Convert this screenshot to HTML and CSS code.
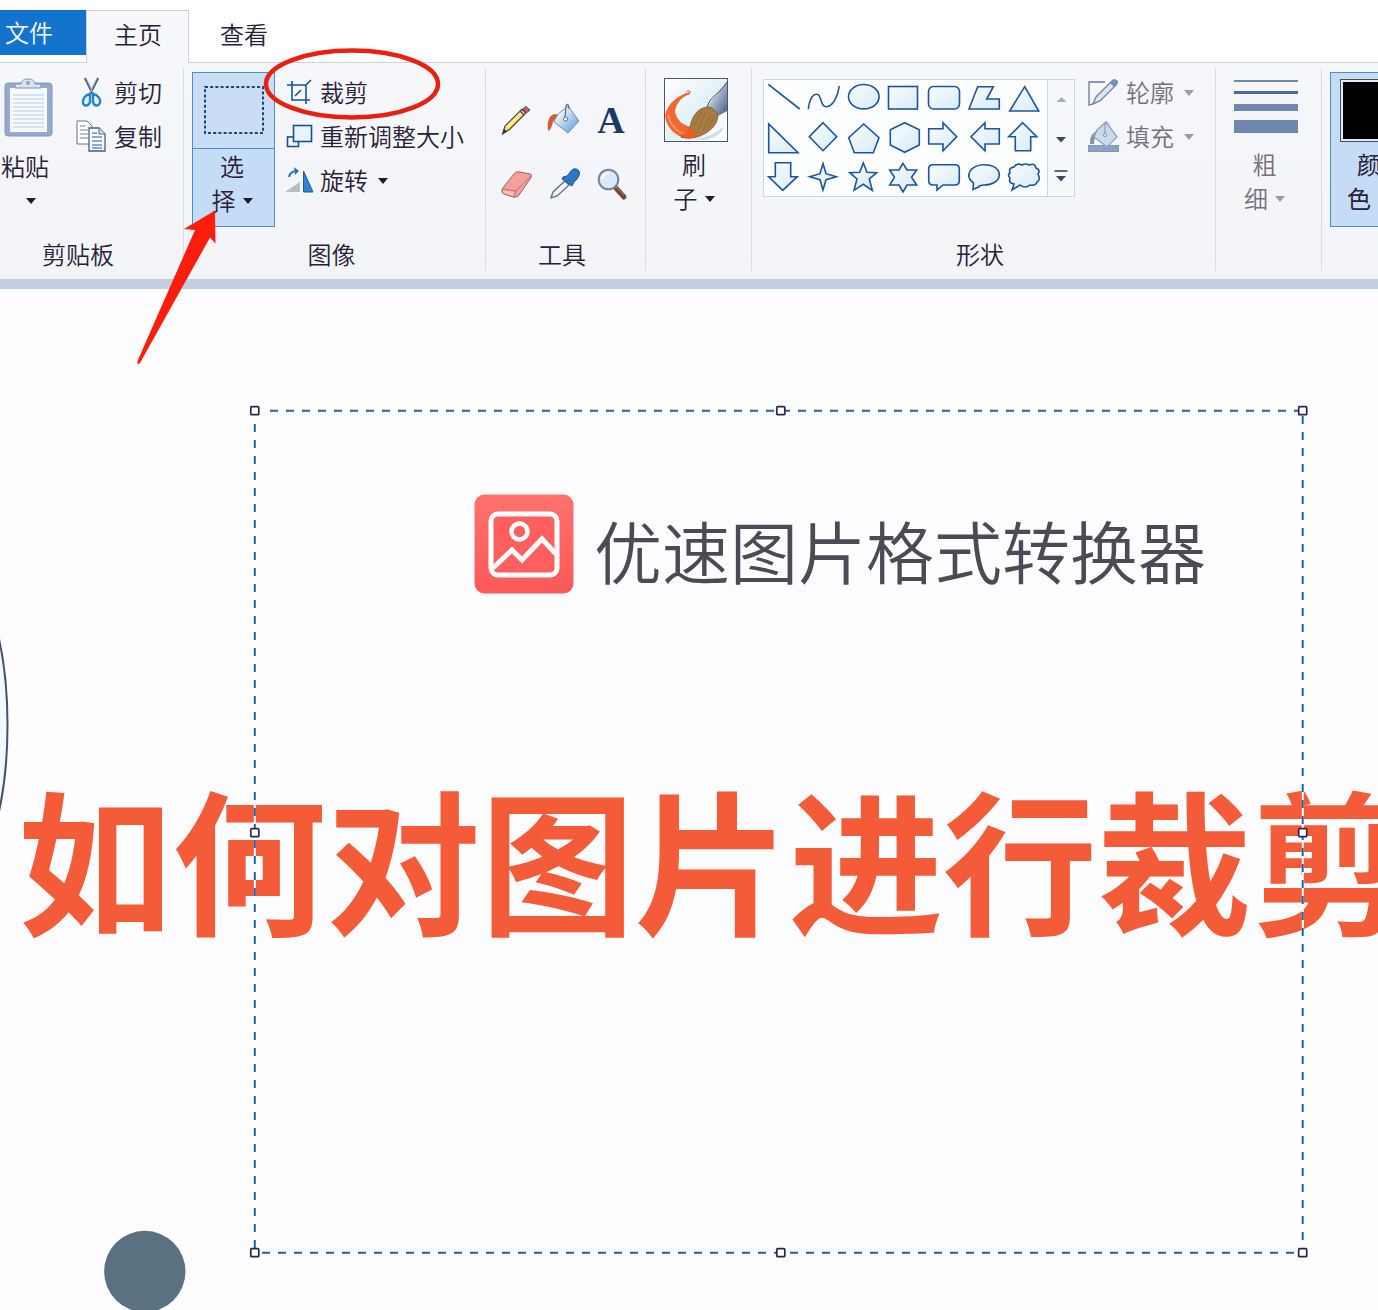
FILE: index.html
```html
<!DOCTYPE html>
<html lang="zh">
<head>
    <meta charset="UTF-8">
    <meta name="viewport" content="width=device-width, initial-scale=1.0">
    <title>画图</title>
    <link rel="stylesheet" href="styles.css">
</head>
<body>
    <!-- 渐变 -->
    <svg class="defs" width="0" height="0">
        <defs>
            <linearGradient id="g-shape" x1="0" y1="0" x2="1" y2="1">
                <stop offset="0" stop-color="#fafdff"/><stop offset="1" stop-color="#d5ebfa"/>
            </linearGradient>
            <linearGradient id="g-bucket" x1="0" y1="0" x2="1" y2="1">
                <stop offset="0.2" stop-color="#f4f9fd"/><stop offset="1" stop-color="#4f94d8"/>
            </linearGradient>
            <linearGradient id="g-logo" x1="0" y1="0" x2="0" y2="1">
                <stop offset="0" stop-color="#ff726d"/><stop offset="1" stop-color="#fb5858"/>
            </linearGradient>
            <linearGradient id="g-brush" x1="0" y1="0" x2="1" y2="1">
                <stop offset="0" stop-color="#ffffff"/><stop offset="0.5" stop-color="#e3f1f8"/><stop offset="1" stop-color="#ffffff"/>
            </linearGradient>
            <linearGradient id="g-metal" x1="0" y1="0" x2="1" y2="1">
                <stop offset="0.2" stop-color="#dfe8f2"/><stop offset="0.6" stop-color="#8b9db8"/><stop offset="1" stop-color="#435878"/>
            </linearGradient>
        </defs>
    </svg>

    <div class="tabs">
        <div class="tab tab-file">文件</div>
        <div class="tab tab-home">主页</div>
        <div class="tab tab-view">查看</div>
    </div>

    <div class="ribbon">
        <!-- 剪贴板 -->
        <div class="group group-clipboard">
            <div class="group-body">
                <div class="paste">
                    <svg width="50" height="62" viewBox="0 0 50 62">
                        <rect x="1" y="5" width="47" height="53" rx="3" fill="#94a9cb" stroke="#8398bb"/>
                        <rect x="6" y="10" width="37" height="44" fill="#f5f9fe"/>
                        <path d="M9 17H40M9 21H40M9 25H40M9 29H40M9 33H40M9 37H40M9 41H40M9 45H40M9 49H40" stroke="#bccbe2"/>
                        <path d="M11 10V6H17C18 2 20 1 24 1S30 2 31 6H37V10Z" fill="#d9e4f0" stroke="#7c92b4"/>
                        <circle cx="24" cy="5" r="2" fill="#8fa3c0"/>
                    </svg>
                    <span>粘贴</span>
                    <i class="caret"></i>
                </div>
                <div class="rows">
                    <div class="row">
                        <svg width="30" height="32" viewBox="0 0 30 32">
                            <path d="M9 2L18 20M22 2L13 20" stroke="#4b5c78" stroke-width="2.4"/>
                            <path d="M10 2L18 19M21 2L13 19" stroke="#c3cfdd" stroke-width="0.8"/>
                            <path d="M14 18C9 19 6.500 23 7 27C8 31 13 30 14 26ZM17 18C22 19 25 23 24 27C22 31 18 30 17 26Z" fill="#e8f4fd" stroke="#2184d4" stroke-width="2.400"/>
                        </svg>
                        <span>剪切</span>
                    </div>
                    <div class="row">
                        <svg width="30" height="32" viewBox="0 0 30 32">
                            <path d="M1 1H11L16 6V24H1Z" fill="#fff" stroke="#66738f"/>
                            <path d="M4 6H9M4 10H12M4 14H12M4 18H12" stroke="#9aabc9" stroke-width="1.500"/>
                            <path d="M13 8H23L29 14V31H13Z" fill="#fff" stroke="#4c5a7c" stroke-width="1.300"/>
                            <path d="M23 8V14H29" fill="#dde7f2" stroke="#4c5a7c"/>
                            <path d="M16 13H21M16 17H26M16 21H26M16 25H26M16 28H26" stroke="#5e8dd2" stroke-width="1.500"/>
                        </svg>
                        <span>复制</span>
                    </div>
                </div>
            </div>
            <div class="group-label">剪贴板</div>
        </div>

        <!-- 图像 -->
        <div class="group group-image">
            <div class="group-body">
                <div class="select-btn">
                    <div class="select-icon">
                        <svg width="62" height="50" viewBox="0 0 62 50">
                            <rect x="2" y="2" width="58" height="46" fill="none" stroke="#15467f" stroke-width="2" stroke-dasharray="3 2.200"/>
                        </svg>
                    </div>
                    <div class="stack">
                        <span>选</span>
                        <span class="with-caret">择<i class="caret"></i></span>
                    </div>
                </div>
                <div class="rows">
                    <div class="row">
                        <svg width="28" height="28" viewBox="0 0 28 28">
                            <path d="M6 3V22H24M1 7H20V26M19 8L25 2M9 18L15 12" fill="none" stroke="#17549a" stroke-width="1.600"/>
                        </svg>
                        <span>裁剪</span>
                    </div>
                    <div class="row">
                        <svg width="28" height="28" viewBox="0 0 28 28">
                            <rect x="1.500" y="15" width="11" height="9.500" fill="#eef6fc" stroke="#1a4f97" stroke-width="1.600"/>
                            <rect x="7.500" y="3.500" width="18" height="16" fill="#e6f3fc" stroke="#1a4f97" stroke-width="1.600"/>
                        </svg>
                        <span>重新调整大小</span>
                    </div>
                    <div class="row">
                        <svg width="28" height="28" viewBox="0 0 28 28">
                            <path d="M14 16V26H-1Z" fill="#b9bec5"/>
                            <path d="M17.500 5L27 26H17.500Z" fill="#2e86cf" stroke="#1a5b9d"/>
                            <path d="M3 11C4 6 7 5 11 5" fill="none" stroke="#2675c2" stroke-width="2"/>
                            <path d="M8 1L13 5L9 9Z" fill="#2675c2"/>
                        </svg>
                        <span>旋转</span>
                        <i class="caret"></i>
                    </div>
                </div>
            </div>
            <div class="group-label">图像</div>
        </div>

        <!-- 工具 -->
        <div class="group group-tools">
            <div class="group-body tools">
                <svg width="34" height="34" viewBox="0 0 34 34">
                    <path d="M3.500 31L6 23L23 6L27 10L11 26Z" fill="#f8d775" stroke="#4a4030" stroke-width="1.100"/>
                    <path d="M8 24.500L24 8.500" stroke="#fff0ad" stroke-width="1.500"/>
                    <path d="M3.500 31L5 26L8 28.500Z" fill="#383039"/>
                    <path d="M24 6L27 3.500L31 7L28 9.500Z" fill="#cc6074" stroke="#713b49"/>
                    <path d="M21 8L25 12M23 6.500L27 10" stroke="#4b515b" stroke-width="1.400"/>
                </svg>
                <svg width="34" height="34" viewBox="0 0 34 34">
                    <path d="M10 12L21 3L32 18L21 30L7 19Z" fill="url(#g-bucket)" stroke="#6f93ba"/>
                    <path d="M8 11C2 12 0 18 1 28C5 27 5 20 7 17L11 12Z" fill="#d65a35"/>
                    <path d="M18 15L19 3C20 0 22 1 22 6" fill="none" stroke="#5b697d" stroke-width="1.200"/>
                    <circle cx="18.500" cy="16" r="2" fill="#fff" stroke="#5b697d"/>
                </svg>
                <span class="letter-a">A</span>
                <svg width="34" height="34" viewBox="0 0 34 34">
                    <path d="M3 22L15 7Q17 4 21 5L31 7Q34 8 31 12L20 28Q18 31 14 30L5 27Q2 26 3 22Z" fill="#f4a09e" stroke="#a75a59"/>
                    <path d="M3 22L17 24L32 9M17 24L15 30" fill="none" stroke="#c26c69"/>
                    <path d="M4 23L16 25L14 29L5 26Z" fill="#f7c3b2"/>
                </svg>
                <svg width="34" height="34" viewBox="0 0 34 34">
                    <path d="M4 31L6 25L18 14L22 18L10 29Z" fill="#f7fbfe" stroke="#61738e" stroke-width="1.400"/>
                    <path d="M16 10L20 9L25 3Q29 0 32 4Q34 7 30 12L27 15L25 19L15 12Z" fill="#2b76c5" stroke="#205693"/>
                </svg>
                <svg width="34" height="34" viewBox="0 0 34 34">
                    <path d="M20 20L29 30" stroke="#784735" stroke-width="5" stroke-linecap="round"/>
                    <path d="M21 20L29 28" stroke="#bd8067" stroke-width="1"/>
                    <circle cx="13.500" cy="12.500" r="9.800" fill="#d9eafb" stroke="#788499" stroke-width="2"/>
                    <path d="M7 12Q8 6 14 6" fill="none" stroke="#fff" stroke-width="2"/>
                </svg>
            </div>
            <div class="group-label">工具</div>
        </div>

        <!-- 刷子 -->
        <div class="group group-brush">
            <div class="group-body brush">
                <svg width="64" height="64" viewBox="0 0 64 64">
                    <rect x="0.500" y="0.500" width="63" height="63" fill="url(#g-brush)"/>
                    <path d="M30 61Q48 60 60 48Q58 58 40 62Z" fill="#cbdde7"/>
                    <path d="M26 14C14 17 4 25 1 37C2 48 8 55 19 60L34 58L30 49C20 49 12 42 11 33C12 26 17 19 26 16Z" fill="#ed6a33"/>
                    <path d="M4 37C6 47 12 53 22 57" fill="none" stroke="#f98d58" stroke-width="2"/>
                    <path d="M22 14Q23 12 26 13Q27 15 24 17" fill="none" stroke="#d7795b"/>
                    <path d="M43 29L54 14L63 4V33L52 39Z" fill="url(#g-metal)"/>
                    <path d="M43 29C47 17 55 17 63 4" fill="none" stroke="#444c5f"/>
                    <path d="M26 50C27 40 33 30 43 29Q51 29 54 38C53 47 46 54 36 58Q26 62 17 59Q23 57 26 50Z" fill="#a77b42" stroke="#80572e" stroke-width="0.800"/>
                    <path d="M15 57Q24 56 27 49L33 58Q23 63 15 57Z" fill="#f05b21"/>
                    <path d="M34 52L42 34M39 53L47 36M30 48L38 33M44 50L51 38" stroke="#8b6435" stroke-width="0.800"/>
                    <rect x="0.500" y="0.500" width="63" height="63" fill="none" stroke="#505567"/>
                </svg>
                <div class="stack">
                    <span>刷</span>
                    <span class="with-caret">子<i class="caret"></i></span>
                </div>
            </div>
        </div>

        <!-- 形状 -->
        <div class="group group-shapes">
            <div class="group-body">
                <div class="gallery">
                    <div class="shapes">
                        <svg viewBox="0 0 40 34"><path d="M4.300 4.300L35.700 29"/></svg>
                        <svg viewBox="0 0 40 34"><path class="open" d="M4.300 29.300C5 21 8 14.300 12.700 14.300C18 14.300 16 26.700 22 26.700C29 26.700 34 16 35.300 6"/></svg>
                        <svg viewBox="0 0 40 34"><ellipse cx="19.800" cy="16.700" rx="15.300" ry="12.200"/></svg>
                        <svg viewBox="0 0 40 34"><rect x="4.500" y="6.500" width="29" height="22.500"/></svg>
                        <svg viewBox="0 0 40 34"><rect x="4.500" y="6.500" width="31" height="22.500" rx="5"/></svg>
                        <svg viewBox="0 0 40 34"><path d="M13.700 6.700H29.300L22.700 19H35.300V29H5Z"/></svg>
                        <svg viewBox="0 0 40 34"><path d="M20.700 6.700L34.700 31H5.700Z"/></svg>

                        <svg viewBox="0 0 40 34"><path d="M4.700 4V32.700H34Z"/></svg>
                        <svg viewBox="0 0 40 34"><path d="M19 2.700L32.700 16.700L19 30.700L5.300 16.700Z"/></svg>
                        <svg viewBox="0 0 40 34"><path d="M19.700 4L35 17.700L29.300 32.700H10.300L4.700 17.700Z"/></svg>
                        <svg viewBox="0 0 40 34"><path d="M20.700 2.700L35.300 9.700V25L20.700 32.300L6.300 25V9.700Z"/></svg>
                        <svg viewBox="0 0 40 34"><path d="M4.700 8.700H19V2.700L32.700 16.700L19 30.700V24H4.700Z"/></svg>
                        <svg viewBox="0 0 40 34"><path d="M35.300 8.700H21V2.700L7 16.700L21 30.700V24H35.300Z"/></svg>
                        <svg viewBox="0 0 40 34"><path d="M18.700 2.700L32.700 16.700H26.700V30.700H11.300V16.700H4.700Z"/></svg>

                        <svg viewBox="0 0 40 34"><path d="M11.300 2.700H26.700V16.700H33.300L18.700 30.300L4.700 16.700H11.300Z"/></svg>
                        <svg viewBox="0 0 40 34"><path d="M19 3.500L22 13.700L32.300 16.700L22 19.700L19 30L16 19.700L5.700 16.700L16 13.700Z"/></svg>
                        <svg viewBox="0 0 40 34"><path d="M19.300 3L23 12.300L32.700 12.700L25.300 19L28.300 30.300L19.300 24.300L10 30.300L13 19L5.700 12.700L15.700 12.300Z"/></svg>
                        <svg viewBox="0 0 40 34"><path d="M19 3.300L23 10H32.700L27.500 17.300L32.700 25H23L19 32L15 25H5.700L10.500 17.300L5.700 10H15Z"/></svg>
                        <svg viewBox="0 0 40 34"><path d="M9 4.700H31Q35.300 4.700 35.300 9V20.500Q35.300 25 31 25H19L13 30V25H9Q4.700 25 4.700 20.500V9Q4.700 4.700 9 4.700Z"/></svg>
                        <svg viewBox="0 0 40 34"><path d="M9 29.500L9.500 23C-1 15 8 4.700 20 4.700C30 4.700 35.300 9 35.300 15C35.300 21 28 25 20 25Q16 25 14.500 27Z"/></svg>
                        <svg viewBox="0 0 40 34"><path d="M10 7Q13 2.500 18 5Q22 3 25 5Q31 2.500 32 8Q37 10 34 14Q37 20 33 22Q32 26 26 25Q21 29 16 25L8 30L10 24Q4 23 6 18Q3 15 6 13Q4 8 10 7Z"/></svg>
                    </div>
                    <div class="gallery-scroll">
                        <svg width="26" height="117" viewBox="0 0 26 117">
                            <path d="M8.500 22L13.500 17L18.500 22Z" fill="#a7afbc"/>
                            <path d="M8 57L13 62.500L18 57Z" fill="#3b4864"/>
                            <path d="M6.500 91H19.500" stroke="#2d3a5a" stroke-width="1.500"/>
                            <path d="M8 96L13 101.500L18 96Z" fill="#3b4864"/>
                        </svg>
                    </div>
                </div>
                <div class="rows disabled">
                    <div class="row">
                        <svg width="32" height="32" viewBox="0 0 32 32">
                            <path d="M18 6H2V29L8 27" fill="none" stroke="#68789a" stroke-width="1.300"/>
                            <path d="M6 28L9 21L25 5Q27 3 30 5Q31 7 28 10L13 25Z" fill="#d9e7f5" stroke="#7188ab" stroke-width="1.400"/>
                            <path d="M23 7L27 11L31 6L27 3Z" fill="#7890b5"/>
                        </svg>
                        <span>轮廓</span>
                        <i class="caret"></i>
                    </div>
                    <div class="row">
                        <svg width="32" height="32" viewBox="0 0 32 32">
                            <rect x="1.500" y="25.500" width="30" height="6" fill="#8ba3c5" stroke="#7d96b9"/>
                            <path d="M3 24Q2 13 12 10L10 15Q7 17 7 24Z" fill="#8094b0"/>
                            <path d="M10 10L19 2L30 17L20 27L7 17Z" fill="#ccd9e8" stroke="#8fa3be" stroke-width="1.300"/>
                            <path d="M18 15V4Q19 0 21 4" fill="none" stroke="#7f91ab"/>
                            <circle cx="18" cy="15" r="1.500" fill="#fff" stroke="#7f91ab"/>
                        </svg>
                        <span>填充</span>
                        <i class="caret"></i>
                    </div>
                </div>
            </div>
            <div class="group-label">形状</div>
        </div>

        <!-- 粗细 -->
        <div class="group group-size">
            <div class="group-body size disabled">
                <div class="lines">
                    <div class="line line1"></div>
                    <div class="line line2"></div>
                    <div class="line line3"></div>
                    <div class="line line4"></div>
                </div>
                <div class="stack">
                    <span>粗</span>
                    <span class="with-caret">细<i class="caret"></i></span>
                </div>
            </div>
        </div>

        <!-- 颜色 -->
        <div class="group group-color">
            <div class="color-btn">
                <div class="swatch"></div>
                <div class="stack">
                    <span>颜</span>
                    <span class="with-caret">色</span>
                </div>
            </div>
        </div>
    </div>

    <div class="canvas">
        <div class="brand">
            <svg width="100" height="100" viewBox="0 0 100 100">
                <rect x="0.500" y="0.500" width="99" height="99" rx="10" fill="url(#g-logo)"/>
                <rect x="17" y="20" width="66" height="61" rx="7" fill="#ff5f5f" stroke="#fff" stroke-width="5"/>
                <circle cx="45.500" cy="37.500" r="8" fill="none" stroke="#fff" stroke-width="4.500"/>
                <path d="M19 74L38 56L48 66L68 45L82 60" fill="none" stroke="#fff" stroke-width="5"/>
            </svg>
            <span>优速图片格式转换器</span>
        </div>
        <div class="headline">如何对图片进行裁剪</div>
    </div>

    <!-- 画布上的图形、选框和红色标注 -->
    <svg class="overlay" width="1378" height="1310" viewBox="0 0 1378 1310">
        <path d="M-3 630C11 686 11 764-3 820" fill="#f3f8fe" stroke="#46506f" stroke-width="2"/>
        <circle cx="144.800" cy="1271.500" r="40.700" fill="#5a7181"/>

        <g fill="none" stroke-width="2">
            <rect x="254.800" y="410.700" width="1048" height="842" stroke="#fff"/>
            <g stroke="#1d63b4" stroke-dasharray="8 8">
                <path d="M254.800 424V1252"/>
                <path d="M1302.700 416V1252"/>
                <path d="M270 410.700H1302"/>
                <path d="M262 1252.700H1302"/>
            </g>
        </g>
        <g fill="#fff" stroke="#2d2548" stroke-width="1.700">
            <rect x="250.800" y="406.700" width="8" height="8" rx="1"/>
            <rect x="776.800" y="406.700" width="8" height="8" rx="1"/>
            <rect x="1298.700" y="406.700" width="8" height="8" rx="1"/>
            <rect x="250.800" y="828.700" width="8" height="8" rx="1"/>
            <rect x="1298.700" y="828.700" width="8" height="8" rx="1"/>
            <rect x="250.800" y="1248.700" width="8" height="8" rx="1"/>
            <rect x="776.800" y="1248.700" width="8" height="8" rx="1"/>
            <rect x="1298.700" y="1248.700" width="8" height="8" rx="1"/>
        </g>

        <ellipse cx="352" cy="84" rx="86" ry="33.500" fill="none" stroke="#e9200f" stroke-width="4.500"/>
        <path d="M215 210.500L184 229L195 230L137.500 361Q137 366 140 363L210 237.500L215.500 243.500Z" fill="#fb1e0d"/>
    </svg>
</body>
</html>
```

FILE: styles.css
```css
body {
    margin: 0;
    width: 1378px;
    height: 1310px;
    overflow: hidden;
    position: relative;
    display: flex;
    flex-direction: column;
    background-color: #fdfdff;
    font-family: "Noto Sans CJK SC", sans-serif;
    font-size: 24px;
    font-weight: 350;
    line-height: 34px;
    color: #29203a;
}

* {
    box-sizing: border-box;
}

svg {
    flex-shrink: 0;
    display: block;
}

.defs {
    position: absolute;
}

/* 选项卡 */
.tabs {
    display: flex;
    height: 63px;
    padding-top: 10px;
    background-color: #fff;
    flex-shrink: 0;
}

.tab {
    height: 53px;
    line-height: 47px;
    border-bottom: 1px solid #ccd2d9;
}

.tab-file {
    width: 86px;
    padding-left: 5px;
    color: #fff;
    line-height: 44px;
    background: linear-gradient(#1473cc 45px, #fff 45px);
}

.tab-home {
    width: 103px;
    padding-left: 27px;
    line-height: 45px;
    background-color: #f5f7fa;
    border: 1px solid #ccd2d9;
    border-bottom: none;
}

.tab-view {
    flex: 1;
    padding-left: 31px;
}

/* 功能区 */
.ribbon {
    display: flex;
    height: 226px;
    padding-top: 5px;
    background: linear-gradient(#f5f7fa, #f2f4f8);
    border-bottom: 10px solid #c2cde0;
    flex-shrink: 0;
}

.group {
    display: flex;
    flex-direction: column;
    height: 203px;
    border-right: 1px solid #d9dee4;
    flex-shrink: 0;
}

.group-body {
    display: flex;
    height: 169px;
}

.group-label {
    text-align: center;
}

.group-clipboard {
    width: 184px;
}

.group-clipboard .group-label {
    padding-right: 27px;
}

.group-image {
    width: 302px;
}

.group-image .group-label {
    padding-right: 6px;
}

.group-tools {
    width: 160px;
}

.group-tools .group-label {
    padding-right: 7px;
}

.group-brush {
    width: 106px;
}

.group-shapes {
    width: 464px;
}

.group-shapes .group-label {
    padding-right: 7px;
}

.group-size {
    width: 106px;
}

.group-color {
    width: 57px;
    border-right: none;
}

.caret {
    width: 0;
    height: 0;
    border: 5px solid transparent;
    border-top: 6px solid #1d1b25;
    border-bottom: none;
}

.disabled {
    color: #75707e;
}

.disabled .caret {
    border-top-color: #9a9ca6;
}

.paste {
    display: flex;
    flex-direction: column;
    width: 76px;
    padding: 10px 0 0 1px;
}

.paste svg {
    margin: 0 0 9px 3px;
}

.paste .caret {
    margin: 15px 0 0 25px;
}

.rows {
    padding-top: 2px;
}

.row {
    display: flex;
    align-items: center;
    height: 44px;
}

.group-clipboard .row span {
    margin-left: 8px;
}

.group-image .row span {
    margin-left: 6px;
}

.row .caret {
    margin: 1px 0 0 10px;
}

.select-btn {
    width: 83px;
    height: 155px;
    margin: 4px 11px 0 8px;
    background-color: #c5dcf7;
    border: 1px solid #4b8ed6;
}

.select-icon {
    height: 76px;
    padding: 12px 0 0 10px;
    border-bottom: 1px solid #4b8ed6;
    background-color: #c9def5;
}

.stack {
    display: flex;
    flex-direction: column;
    align-items: center;
}

.with-caret {
    display: flex;
    align-items: center;
    gap: 7px;
}

.with-caret .caret {
    margin-top: 2px;
}

.select-btn .stack {
    padding-right: 3px;
}

.tools {
    display: grid;
    grid-template-columns: repeat(3, 34px);
    grid-template-rows: 34px 34px;
    gap: 30px 14px;
    padding: 35px 0 0 13px;
}

.letter-a {
    font-family: "Liberation Serif", serif;
    font-size: 38px;
    font-weight: 700;
    text-align: center;
    padding-right: 2px;
    color: #1c3867;
}

.brush {
    flex-direction: column;
    padding: 10px 0 0 18px;
}

.brush .stack {
    width: 60px;
    padding-top: 5px;
}

.gallery {
    display: flex;
    width: 312px;
    height: 118px;
    margin: 11px 12px 0 11px;
    border: 1px solid #cfd6de;
    background-color: #fcfeff;
}

.shapes {
    display: grid;
    grid-template-columns: repeat(7, 40px);
    grid-template-rows: repeat(3, 34px);
    row-gap: 6px;
    width: 283px;
}

.shapes svg {
    width: 40px;
    height: 34px;
    fill: url(#g-shape);
    stroke: #1c559b;
    stroke-width: 1.6;
}

.shapes .open {
    fill: none;
}

.gallery-scroll {
    flex: 1;
    border-left: 1px solid #cfd6de;
    background-color: #f6f8fb;
}

.group-shapes .row span {
    margin-left: 7px;
}

.size {
    flex-direction: column;
    padding: 12px 0 0 18px;
}

.lines {
    width: 64px;
    height: 67px;
}

.line {
    background-color: #6f88b0;
}

.line1 {
    height: 2px;
    margin-bottom: 9px;
}

.line2 {
    height: 3px;
    margin-bottom: 10px;
    background-color: #4b6b9f;
}

.line3 {
    height: 7px;
    margin-bottom: 9px;
}

.line4 {
    height: 13px;
}

.size .stack {
    width: 61px;
}

.color-btn {
    width: 90px;
    height: 155px;
    margin: 4px 0 0 8px;
    padding: 6px 0 0 9px;
    background-color: #c5dcf7;
    border: 1px solid #4b8ed6;
}

.swatch {
    width: 64px;
    height: 63px;
    border: 1px solid #47505f;
    background-color: #000;
    box-shadow: inset 0 0 0 2px #e2ebf5;
}

.color-btn .stack {
    align-items: flex-start;
    padding: 5px 0 0 7px;
    font-weight: 400;
}

.color-btn .stack span:first-child {
    padding-left: 10px;
}

/* 画布 */
.canvas {
    flex: 1;
    overflow: hidden;
}

.brand {
    display: flex;
    align-items: flex-start;
    gap: 20px;
    padding: 204.500px 0 0 474px;
    font-size: 68px;
    line-height: 100px;
    color: #4b4a55;
    white-space: nowrap;
}

.brand span {
    height: 100px;
    padding-top: 6px;
}

.headline {
    padding: 152px 0 0 18px;
    font-size: 154.200px;
    line-height: 220px;
    font-weight: 700;
    color: #f45b38;
    white-space: nowrap;
}

.overlay {
    position: absolute;
    top: 0;
    left: 0;
}
```
